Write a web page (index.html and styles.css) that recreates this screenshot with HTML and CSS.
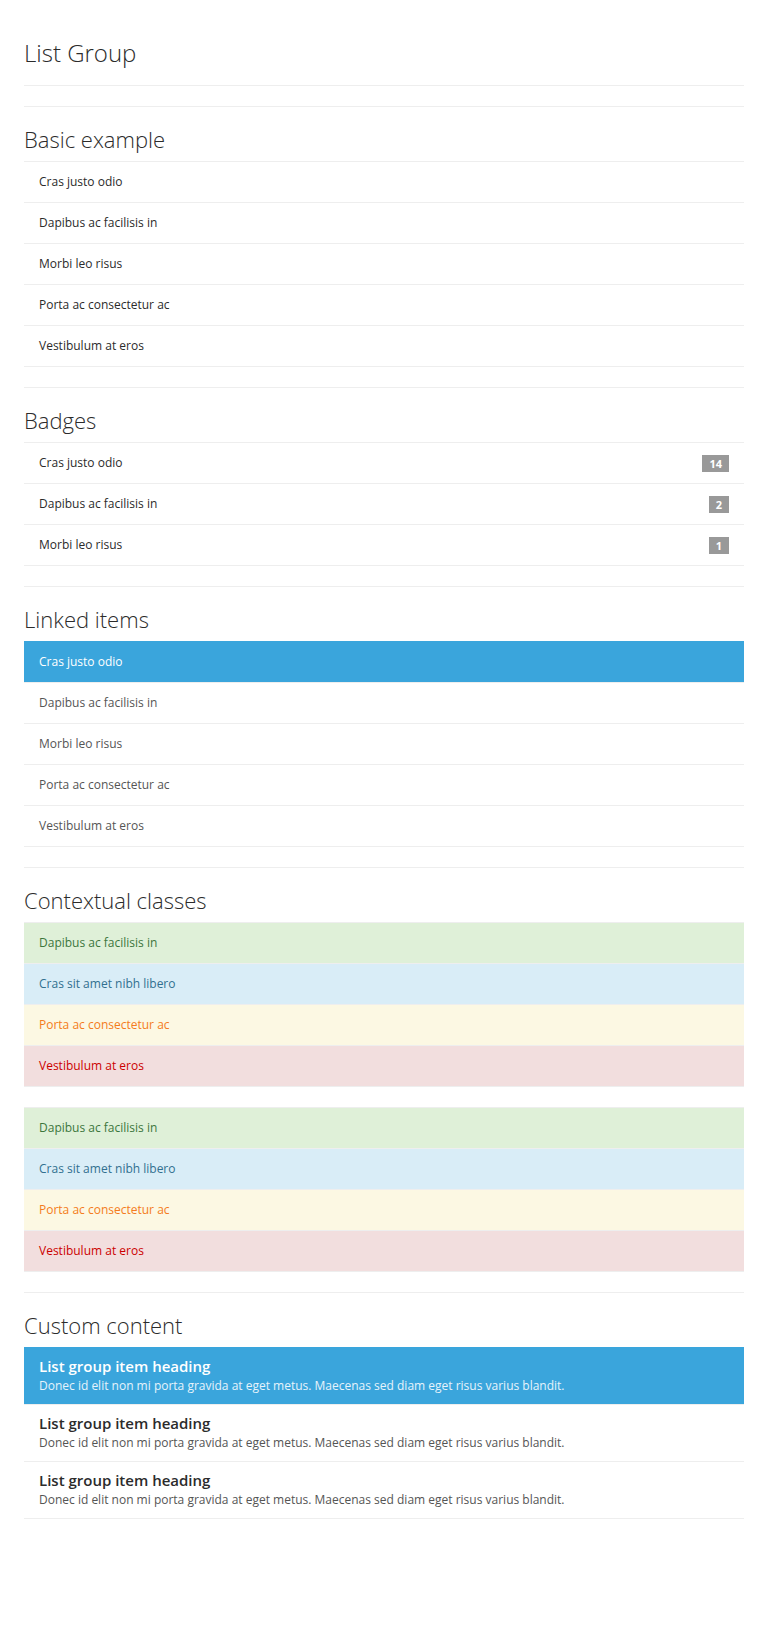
FILE: index.html
```html
<!DOCTYPE html>
<html lang="en">
<head>
<meta charset="utf-8">
<title>List Group</title>
<link rel="stylesheet" href="styles.css">
</head>
<body>
<div class="container">
  <div class="page-header">
    <h1 class="title">List Group</h1>
  </div>

  <section class="section">
    <h2 class="title section-title">Basic example</h2>
    <ul class="list-group">
      <li class="item">Cras justo odio</li>
      <li class="item">Dapibus ac facilisis in</li>
      <li class="item">Morbi leo risus</li>
      <li class="item">Porta ac consectetur ac</li>
      <li class="item">Vestibulum at eros</li>
    </ul>
  </section>

  <section class="section">
    <h2 class="title section-title">Badges</h2>
    <ul class="list-group">
      <li class="item"><span>Cras justo odio</span><span class="badge">14</span></li>
      <li class="item"><span>Dapibus ac facilisis in</span><span class="badge">2</span></li>
      <li class="item"><span>Morbi leo risus</span><span class="badge">1</span></li>
    </ul>
  </section>

  <section class="section">
    <h2 class="title section-title">Linked items</h2>
    <div class="list-group">
      <a href="#" class="item link active">Cras justo odio</a>
      <a href="#" class="item link">Dapibus ac facilisis in</a>
      <a href="#" class="item link">Morbi leo risus</a>
      <a href="#" class="item link">Porta ac consectetur ac</a>
      <a href="#" class="item link">Vestibulum at eros</a>
    </div>
  </section>

  <section class="section">
    <h2 class="title section-title">Contextual classes</h2>
    <ul class="list-group">
      <li class="item success">Dapibus ac facilisis in</li>
      <li class="item info">Cras sit amet nibh libero</li>
      <li class="item warning">Porta ac consectetur ac</li>
      <li class="item danger">Vestibulum at eros</li>
    </ul>
    <div class="list-group">
      <a href="#" class="item link success">Dapibus ac facilisis in</a>
      <a href="#" class="item link info">Cras sit amet nibh libero</a>
      <a href="#" class="item link warning">Porta ac consectetur ac</a>
      <a href="#" class="item link danger">Vestibulum at eros</a>
    </div>
  </section>

  <section class="section">
    <h2 class="title section-title">Custom content</h2>
    <div class="list-group">
      <a href="#" class="item link custom active">
        <h4 class="item-heading">List group item heading</h4>
        <p class="item-text">Donec id elit non mi porta gravida at eget metus. Maecenas sed diam eget risus varius blandit.</p>
      </a>
      <a href="#" class="item link custom">
        <h4 class="item-heading">List group item heading</h4>
        <p class="item-text">Donec id elit non mi porta gravida at eget metus. Maecenas sed diam eget risus varius blandit.</p>
      </a>
      <a href="#" class="item link custom">
        <h4 class="item-heading">List group item heading</h4>
        <p class="item-text">Donec id elit non mi porta gravida at eget metus. Maecenas sed diam eget risus varius blandit.</p>
      </a>
    </div>
  </section>
</div>
</body>
</html>
```

FILE: styles.css
```css
html, body {
  background: #ffffff;
}

body {
  margin: 0;
  font-family: "Open Sans", "Liberation Sans", sans-serif;
  font-size: 12px;
  line-height: 20px;
  color: #333333;
}

.container {
  width: 720px;
  margin: 0 auto;
}

.page-header {
  margin: 40px 0 20px;
  padding-bottom: 19px;
  border-bottom: 1px solid #eeeeee;
}

.title {
  margin: 0;
  font-size: 24px;
  font-weight: 300;
  line-height: 26px;
  color: #2b2b2b;
}

.section {
  border-top: 1px solid #eeeeee;
}

.section-title {
  margin: 20px 0 10px;
  font-size: 22px;
  line-height: 24px;
}

.list-group {
  list-style: none;
  margin: 0 0 20px;
  padding: 0;
}

.item {
  display: flex;
  justify-content: space-between;
  align-items: center;
  padding: 10px 15px;
  line-height: 20px;
  border-top: 1px solid #eeeeee;
  border-bottom: 1px solid #eeeeee;
  margin-bottom: -1px;
  color: #2b2b2b;
}

.item:last-child {
  margin-bottom: 0;
}

.link {
  color: #555555;
  text-decoration: none;
}

.badge {
  display: inline-block;
  background: #999999;
  color: #ffffff;
  font-size: 11px;
  font-weight: 700;
  line-height: 11px;
  padding: 3px 7px;
}

.item.active {
  background: #3aa5dc;
  border-color: #3aa5dc;
  color: #ffffff;
}

.success {
  background: #dff0d8;
  color: #3c763d;
}

.info {
  background: #d9edf7;
  color: #31708f;
}

.warning {
  background: #fcf8e3;
  color: #f47c20;
}

.danger {
  background: #f2dede;
  color: #cc0000;
}

.custom {
  display: block;
}

.item-heading {
  margin: 0 0 4px;
  font-size: 15px;
  font-weight: 600;
  line-height: 16px;
  color: #2b2b2b;
}

.item-text {
  margin: 0;
  font-size: 12px;
  line-height: 16px;
  color: #555555;
}

.custom.active .item-heading {
  color: #ffffff;
}

.custom.active .item-text {
  color: #e6f3fb;
}
```
